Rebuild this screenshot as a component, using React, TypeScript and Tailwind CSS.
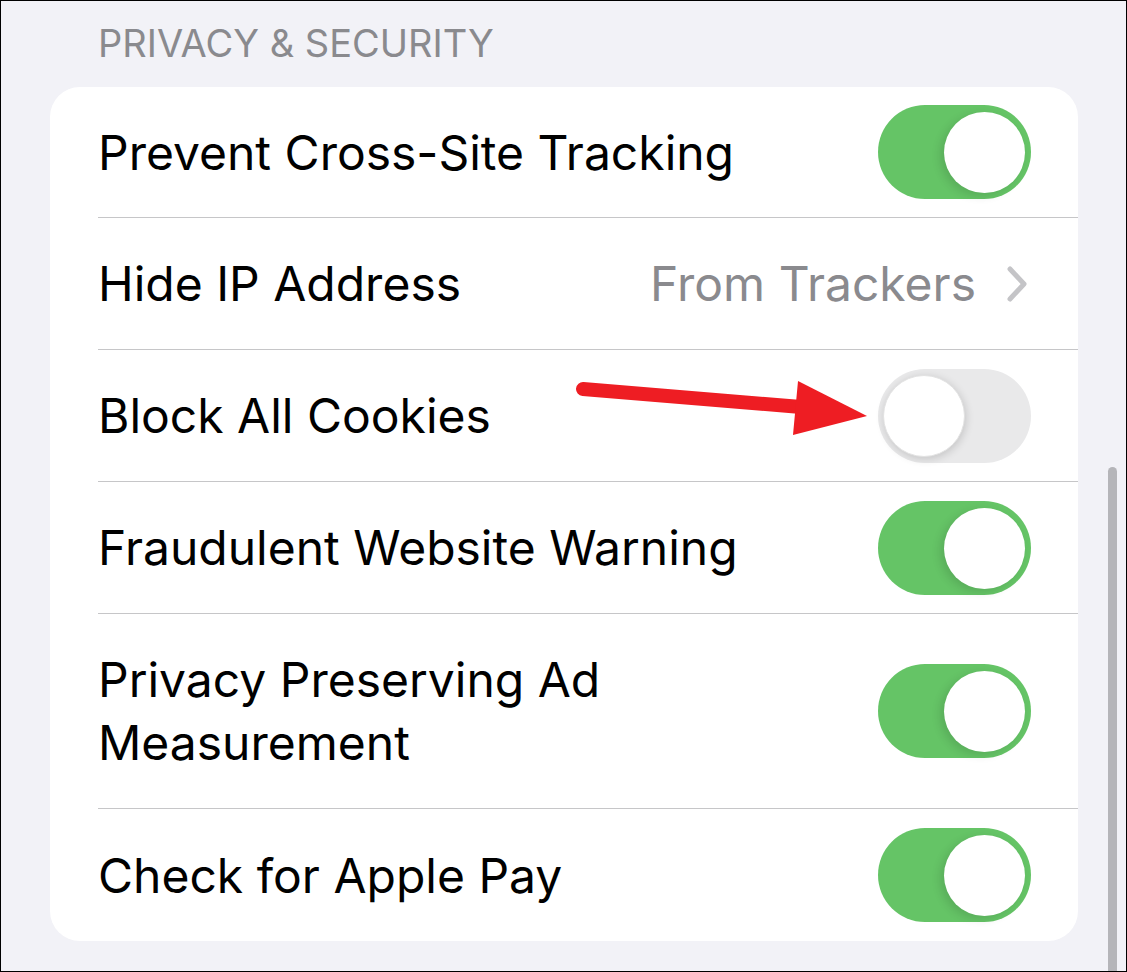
import React from "react";

const Toggle = ({ on }: { on: boolean }) => {
    if (on) {
        return (
            <div className="relative w-[153px] h-[94px] rounded-full bg-[#65c466] shrink-0">
                <div className="absolute top-[7px] right-[6px] w-[81px] h-[81px] rounded-full bg-white shadow-[-4px_3px_10px_rgba(0,0,0,0.12)]" />
            </div>
        );
    }
    return (
        <div className="relative w-[153px] h-[94px] rounded-full bg-[#e9e9ea] shrink-0">
            <div className="absolute top-[6px] left-[5px] w-[82px] h-[82px] rounded-full bg-white shadow-[1px_2px_8px_rgba(0,0,0,0.16)] border border-[#e2e2e2]" />
        </div>
    );
};

const Row = ({ children, right, height = "h-[132px]", last = false }: { children: React.ReactNode; right: React.ReactNode; height?: string; last?: boolean }) => (
    <div className="pl-[48px]">
        <div className={`flex items-center justify-between pr-[47px] ${height} ${last ? "" : "border-b border-[#c6c6c8]"}`}>
            <div className="text-[48px] leading-[63px] text-black">{children}</div>
            {right}
        </div>
    </div>
);

const App = () => {
    return (
        <div className="relative w-[1127px] h-[972px] bg-[#f2f2f7] border border-black overflow-hidden font-['Inter','Liberation_Sans',sans-serif]">
            <div className="pl-[97px] pt-[20px] h-[86px] text-[38px] leading-[44px] text-[#8a8a8e]">
                PRIVACY &amp; SECURITY
            </div>

            <div className="mx-[49px] w-[1028px] bg-white rounded-[30px] overflow-hidden">
                <Row height="h-[131px]" right={<Toggle on />}>
                    Prevent Cross-Site Tracking
                </Row>
                <Row
                    right={
                        <div className="flex items-center gap-[30px] text-[48px] text-[#8a8a8e] pr-[3px]">
                            <span>From Trackers</span>
                            <svg width="22" height="38" viewBox="0 0 22 38" fill="none">
                                <path d="M4 4 L18 19 L4 34" stroke="#c4c4c7" strokeWidth="5" strokeLinecap="round" strokeLinejoin="round" />
                            </svg>
                        </div>
                    }
                >
                    Hide IP Address
                </Row>
                <Row right={<Toggle on={false} />}>Block All Cookies</Row>
                <Row right={<Toggle on />}>Fraudulent Website Warning</Row>
                <Row height="h-[195px]" right={<Toggle on />}>
                    Privacy Preserving Ad
                    <br />
                    Measurement
                </Row>
                <Row last right={<Toggle on />}>Check for Apple Pay</Row>
            </div>

            {/* scroll indicator */}
            <div className="absolute left-[1107px] top-[466px] w-[9px] h-[520px] rounded-full bg-[#b5b5b9]" />

            {/* annotation arrow */}
            <svg className="absolute left-0 top-0" width="1127" height="972" viewBox="0 0 1127 972">
                <line x1="582" y1="388" x2="800" y2="406" stroke="#ee1d23" strokeWidth="14" strokeLinecap="round" />
                <polygon points="797,380 792,434 866,415" fill="#ee1d23" />
            </svg>
        </div>
    );
};

export default App;
